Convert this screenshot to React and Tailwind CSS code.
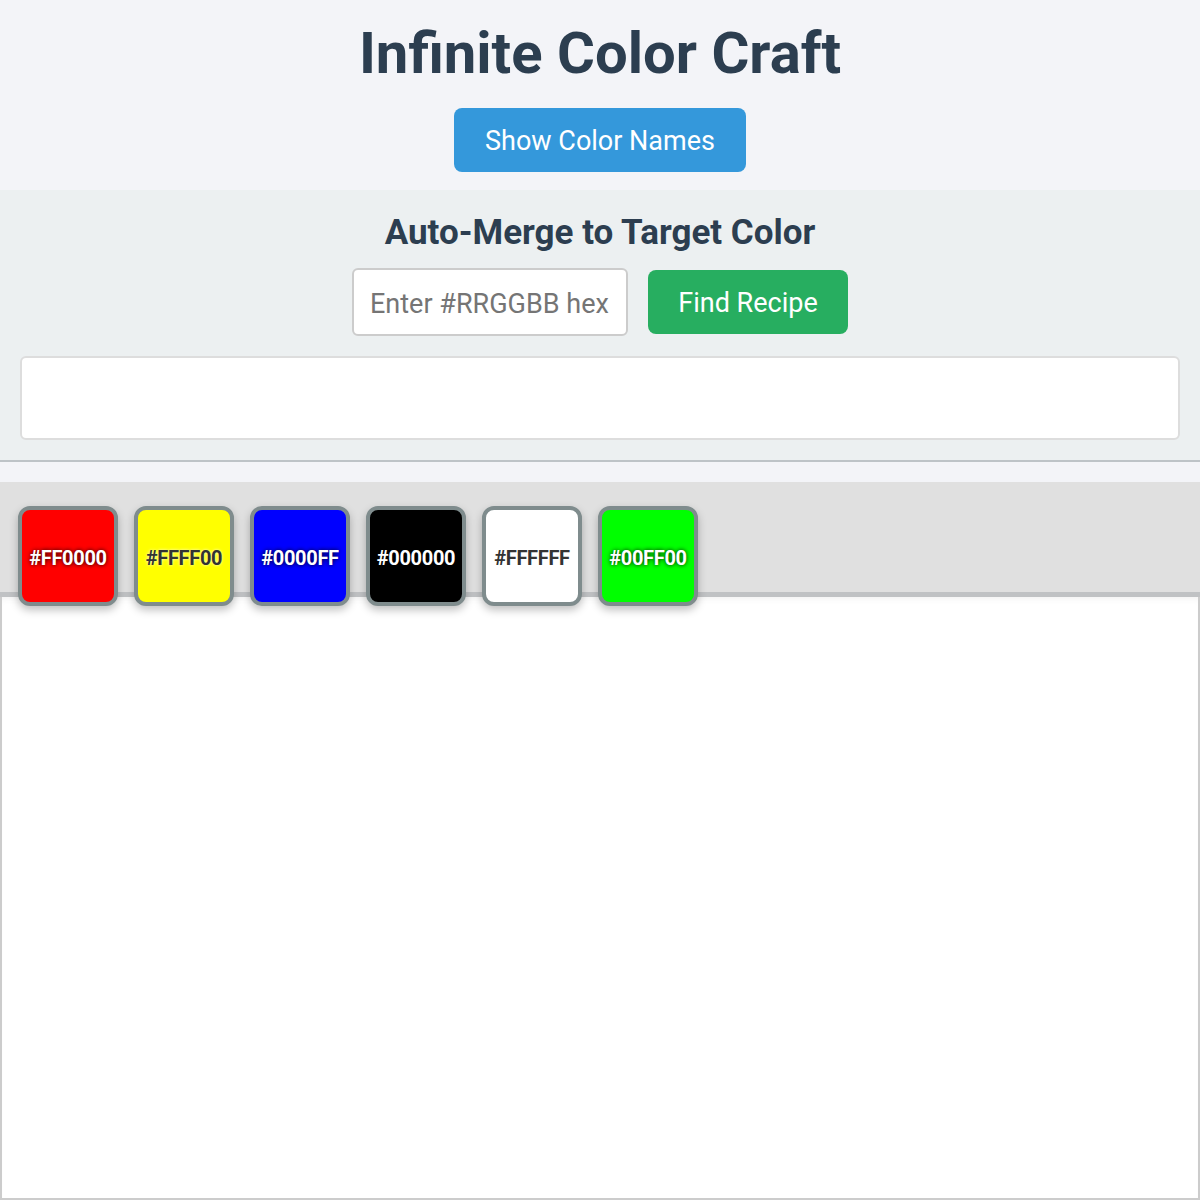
import React from 'react'

const swatches = [
  { hex: '#FF0000', bg: 'bg-[#ff0000]', light: false },
  { hex: '#FFFF00', bg: 'bg-[#ffff00]', light: true },
  { hex: '#0000FF', bg: 'bg-[#0000ff]', light: false },
  { hex: '#000000', bg: 'bg-[#000000]', light: false },
  { hex: '#FFFFFF', bg: 'bg-[#ffffff]', light: true },
  { hex: '#00FF00', bg: 'bg-[#00ff00]', light: false }
]

function Swatch({ hex, bg, light }) {
  return (
    <div
      className={`flex h-[100px] w-[100px] shrink-0 items-center justify-center rounded-[12px] border-[4px] border-[#7f8c8d] pt-[3px] shadow-[0_4px_8px_rgba(0,0,0,0.25)] ${bg}`}
    >
      <span
        className={
          light
            ? 'text-[20px] font-bold tracking-[-0.3px] text-[#333333] [text-shadow:0_0_3px_rgba(255,255,255,0.9)]'
            : 'text-[20px] font-bold tracking-[-0.3px] text-white [text-shadow:0_0_4px_rgba(0,0,0,0.95)]'
        }
      >
        {hex}
      </span>
    </div>
  )
}

export default function App() {
  return (
    <div className="flex min-h-[1200px] flex-col bg-[#f3f4f8] font-['Roboto',sans-serif] text-[#2c3e50]">
      {/* Header */}
      <header className="flex flex-col items-center pt-[19px] pb-[18px]">
        <h1 className="text-[58px] font-bold leading-[68px]">Infinite Color Craft</h1>
        <button className="mt-[21px] h-[64px] w-[292px] rounded-[8px] bg-[#3498db] pt-[2px] text-[27px] text-white">
          Show Color Names
        </button>
      </header>

      {/* Auto-merge */}
      <section className="flex flex-col items-center border-b-2 border-[#bdc3c7] bg-[#ecf0f1] px-[20px] pt-[11px] pb-[20px]">
        <h2 className="text-[35px] font-bold leading-[64px]">Auto-Merge to Target Color</h2>
        <div className="mt-[3px] flex items-center gap-[20px]">
          <input
            type="text"
            placeholder="Enter #RRGGBB hex"
            className="h-[68px] w-[276px] rounded-[6px] border-2 border-[#cccccc] bg-white px-[16px] pt-[3px] text-[27px] placeholder:text-[#757575] outline-none"
          />
          <button className="h-[64px] w-[200px] rounded-[8px] bg-[#27ae60] pt-[2px] text-[27px] text-white">
            Find Recipe
          </button>
        </div>
        <div className="mt-[20px] h-[84px] w-full rounded-[6px] border-2 border-[#dddddd] bg-white" />
      </section>

      {/* Palette */}
      <div className="relative z-10 mt-[20px] flex h-[115px] gap-[16px] border-b-[5px] border-[#c0c2c4] bg-[#e0e0e0] pl-[18px] pt-[24px]">
        {swatches.map((s) => (
          <Swatch key={s.hex} {...s} />
        ))}
      </div>

      {/* Canvas */}
      <div className="flex-1 border-2 border-t-0 border-[#cccccc] bg-white shadow-[inset_0_6px_8px_-6px_rgba(0,0,0,0.08)]" />
    </div>
  )
}
